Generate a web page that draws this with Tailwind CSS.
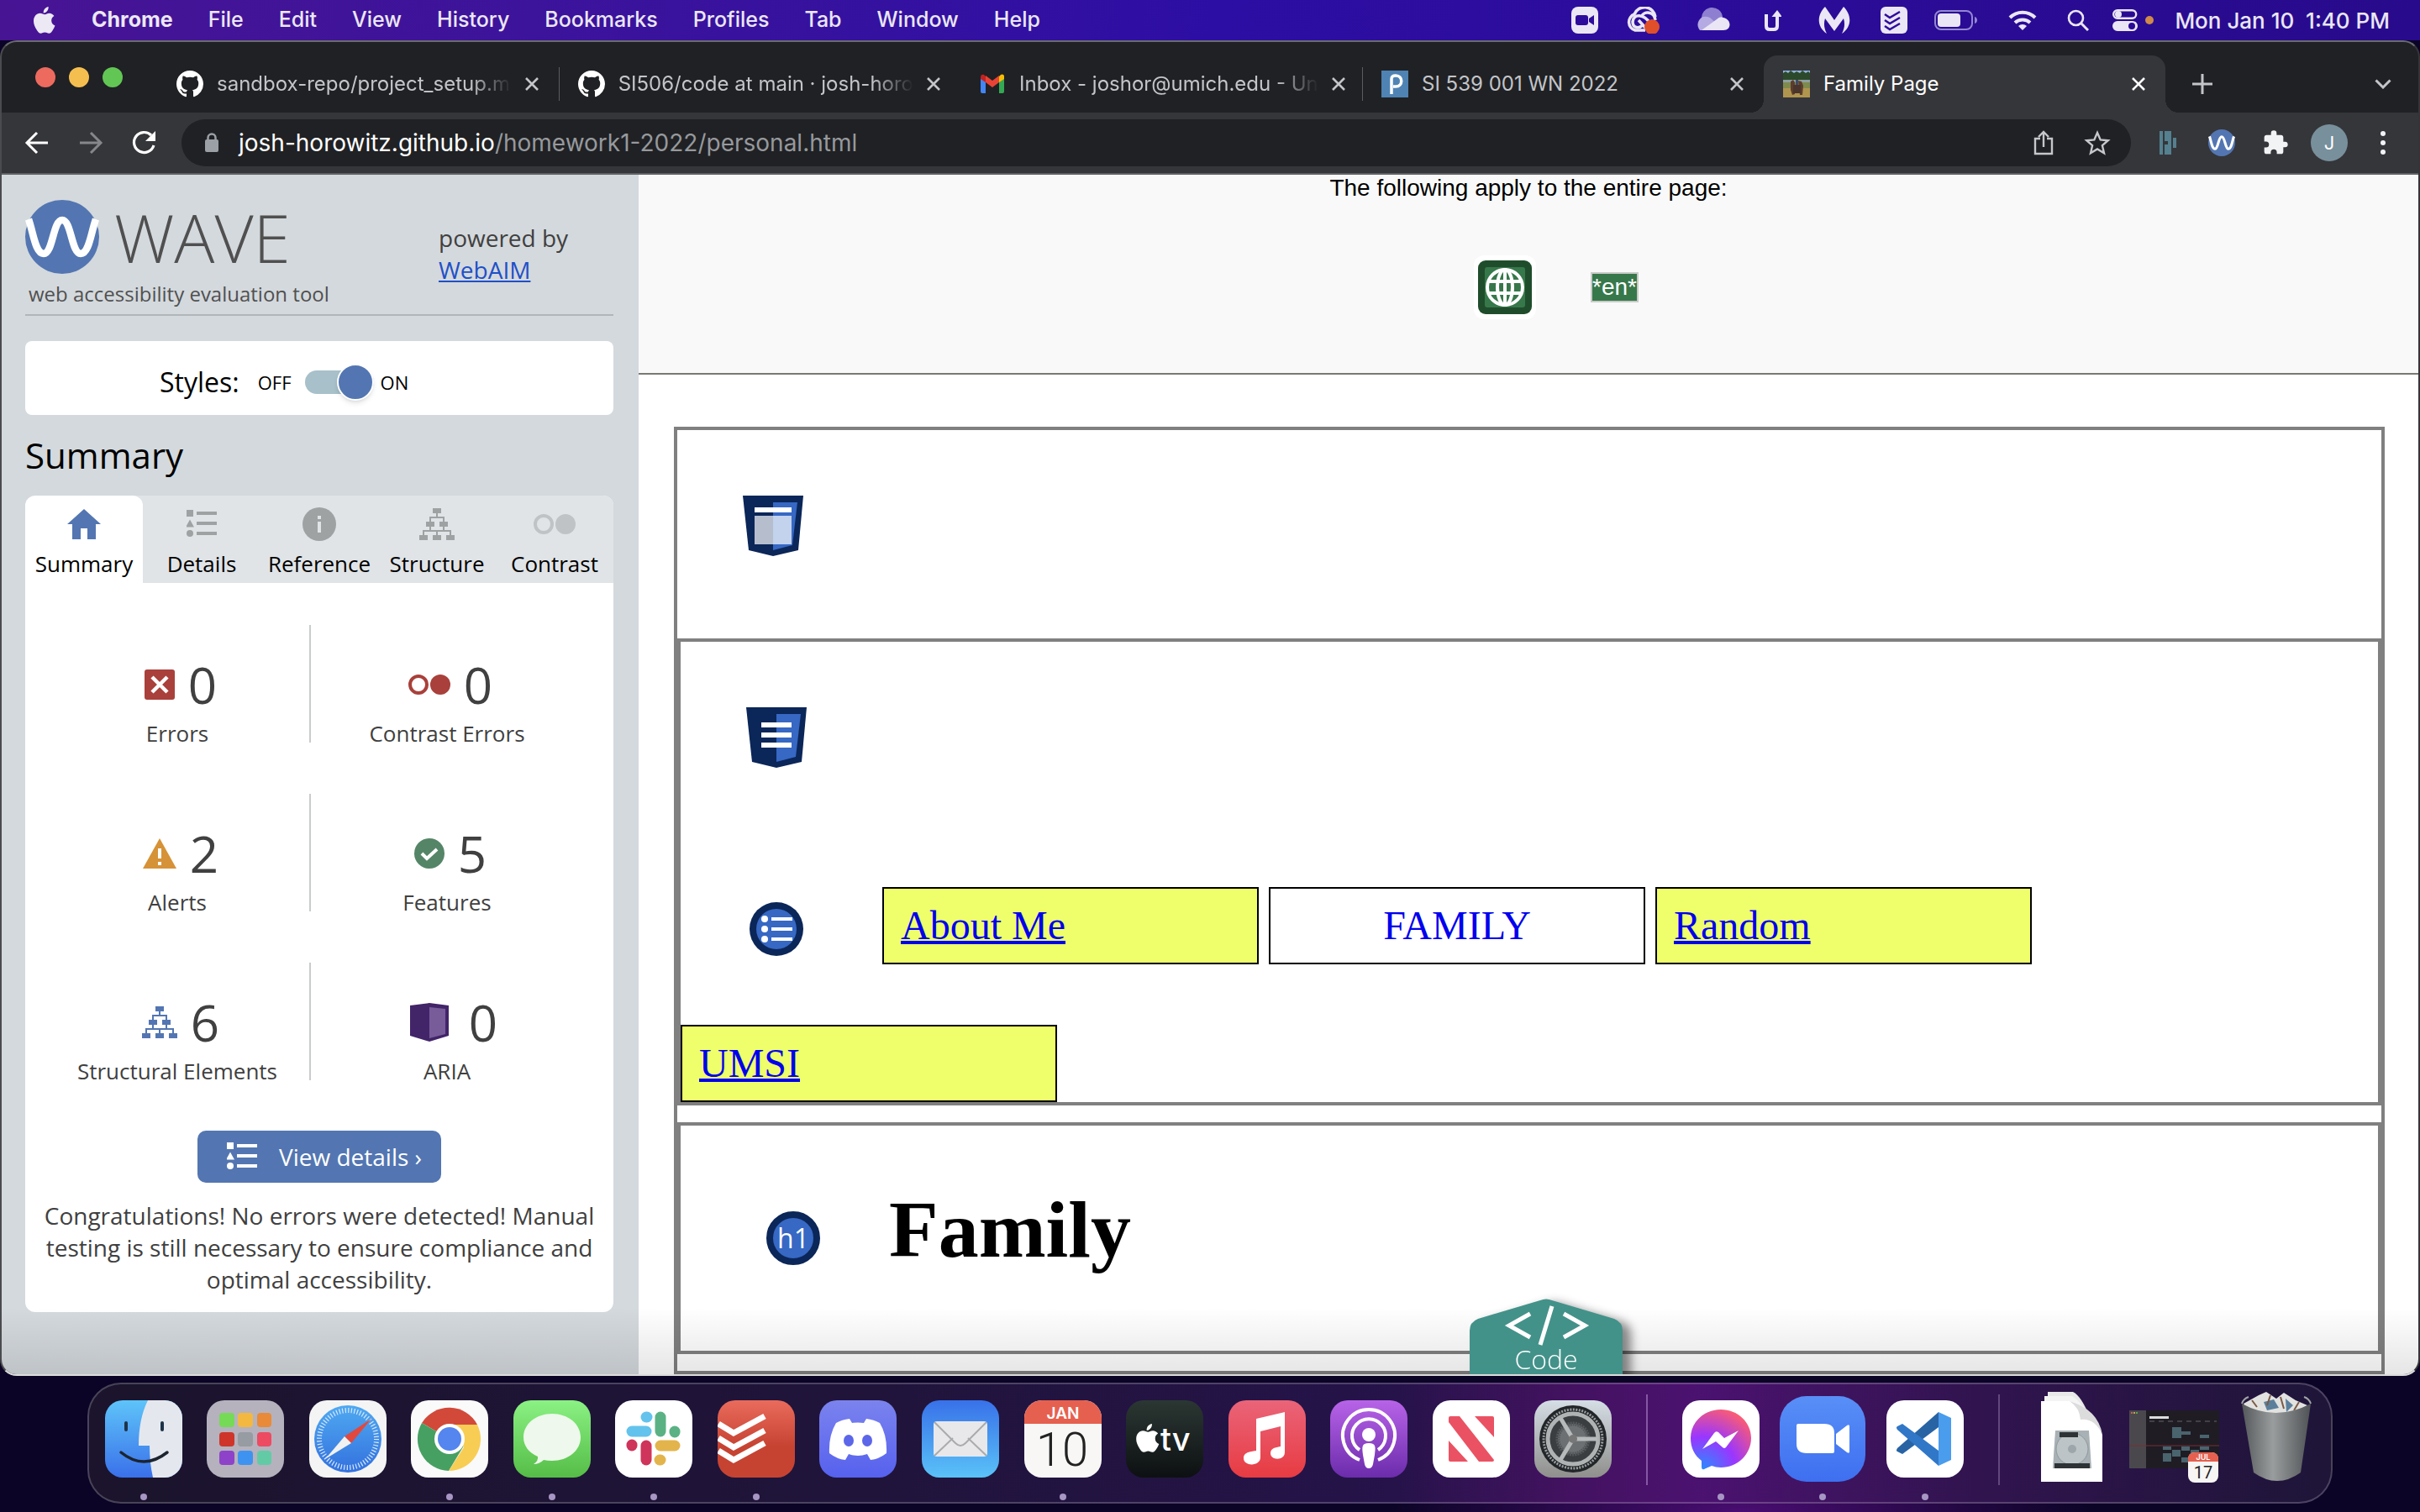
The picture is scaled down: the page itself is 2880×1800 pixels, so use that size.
<!DOCTYPE html>
<html lang="en">
<head>
<meta charset="utf-8">
<title>Family Page</title>
<script src="https://cdn.jsdelivr.net/npm/@tailwindcss/browser@4"></script>
</head>
<body class="flex h-screen flex-col overflow-hidden bg-[#0b0426] bg-[radial-gradient(ellipse_420px_90px_at_72%_100%,#4a0d72,transparent)] font-['Inter',sans-serif]">

<svg class="hidden">
  <symbol id="github" viewBox="0 0 16 16"><path fill="#fff" d="M8 0C3.58 0 0 3.58 0 8c0 3.54 2.29 6.53 5.47 7.59.4.07.55-.17.55-.38 0-.19-.01-.82-.01-1.49-2.01.37-2.53-.49-2.69-.94-.09-.23-.48-.94-.82-1.13-.28-.15-.68-.52-.01-.53.63-.01 1.08.58 1.23.82.72 1.21 1.87.87 2.33.66.07-.52.28-.87.51-1.07-1.78-.2-3.64-.89-3.64-3.95 0-.87.31-1.59.82-2.15-.08-.2-.36-1.02.08-2.12 0 0 .67-.21 2.2.82.64-.18 1.32-.27 2-.27s1.36.09 2 .27c1.53-1.04 2.2-.82 2.2-.82.44 1.1.16 1.92.08 2.12.51.56.82 1.27.82 2.15 0 3.07-1.87 3.75-3.65 3.95.29.25.54.73.54 1.48 0 1.07-.01 1.93-.01 2.2 0 .21.15.46.55.38A8.01 8.01 0 0 0 16 8c0-4.42-3.58-8-8-8z"/></symbol>
  <symbol id="close" viewBox="0 0 24 24"><path d="M5 5 19 19M19 5 5 19" fill="none" stroke="currentColor" stroke-width="2.6"/></symbol>
  <symbol id="apple" viewBox="0 0 26 32"><path fill="currentColor" d="M17.6 0c.3 2.500-.7 4.200-1.800 5.500-1.100 1.300-2.600 2-4.100 1.900-.2-2 .7-4 1.800-5.200C14.600 1 16.200.2 17.600 0zM13.400 9.200c1.300 0 2.900-1.500 5.300-1.500 2.300 0 4.500 1.300 5.700 3.200-2 1.300-3.200 3.100-3.200 5.600 0 3 1.700 5 4.300 6.100-.6 1.900-1.600 3.800-2.900 5.700-1.100 1.700-2.400 3.500-4.400 3.500-1.900 0-2.500-1.200-4.800-1.200-2.300 0-3 1.200-4.800 1.200-1.900 0-3.300-1.800-4.500-3.600C1.400 24.200 0 20.500 0 17.200c0-5.800 3.600-9.400 7.500-9.400 2.500 0 4.300 1.400 5.900 1.400z"/></symbol>
  <symbol id="list" viewBox="0 0 36 34"><g fill="currentColor"><path d="M0 0h8v8H0zM4 11.500 9 20.500H-1z"/><circle cx="4" cy="28" r="4"/><path d="M12 2h24v4H12zM12 14h24v4H12zM12 26h24v4H12z"/></g></symbol>
  <symbol id="tree" viewBox="0 0 42 38"><g fill="currentColor"><path d="M16 0h10v6H16zM8 16h10v6H8zM24 16h10v6H24zM0 32h10v6H0zM16 32h10v6H16zM32 32h10v6H32z"/></g><path d="M21 6v5M13 17v-6h16v6M13 22v5M29 22v5M5 33v-6h32v6M21 27v6" fill="none" stroke="currentColor" stroke-width="2"/></symbol>
  <symbol id="rings" viewBox="0 0 50 24"><circle cx="12" cy="12" r="10" fill="none" stroke="currentColor" stroke-width="4"/><circle cx="38" cy="12" r="12" fill="currentColor"/></symbol>
  <symbol id="shield" viewBox="0 0 72 72"><path fill="#0b2658" d="M0 0h72l-6 65-30 7-29-7z"/><path fill="#3668c4" d="M36 8h29l-6 51-23 6z"/></symbol>
  <symbol id="wave" viewBox="0 0 88 88"><circle cx="44" cy="44" r="44" fill="#5376b2"/><path d="M4 23C10 40 12 64 22 64 33 64 33 24 44 24S55 64 66 64C76 64 78 40 84 23" fill="none" stroke="#fff" stroke-width="8.500"/></symbol>
</svg>

<!-- Menu bar -->
<header class="flex h-12 shrink-0 items-center bg-linear-to-r from-[#471494] via-[#2d0ea4] to-[#280a8c] pr-9 pl-10 text-[25px] font-medium text-white/90">
  <svg class="mr-[22px] h-8 w-[26px]"><use href="#apple"/></svg>
  <nav class="flex flex-1 items-center">
    <button class="px-[21px] font-bold">Chrome</button>
    <button class="px-[21px]">File</button>
    <button class="px-[21px]">Edit</button>
    <button class="px-[21px]">View</button>
    <button class="px-[21px]">History</button>
    <button class="px-[21px]">Bookmarks</button>
    <button class="px-[21px]">Profiles</button>
    <button class="px-[21px]">Tab</button>
    <button class="px-[21px]">Window</button>
    <button class="px-[21px]">Help</button>
  </nav>
  <div class="flex items-center">
    <svg class="h-8 w-8" viewBox="0 0 32 32"><rect width="32" height="32" rx="8" fill="#ebe6f5"/><rect x="5" y="10" width="15" height="12" rx="3" fill="#2d0c9c"/><path d="M21 14l6-4v12l-6-4z" fill="#2d0c9c"/></svg>
    <svg class="ml-8 h-8 w-[42px]" viewBox="0 0 42 32"><g fill="none" stroke="#ebe6f5" stroke-width="3.500"><path d="M24 28H12A10 10 0 0 1 11 9a13 13 0 0 1 25 3"/><path d="M30 20c-8-12-20-12-21-2 0 8 8 8 12 4M19 12c4-8 16-6 17 4M16 16l10 11"/></g><circle cx="32" cy="24" r="9" fill="#df4f2a"/></svg>
    <svg class="ml-10 h-8 w-11" viewBox="0 0 44 32"><path d="M9 15a12 12 0 0 1 25-3l-8 8z" fill="#8f7fd0"/><path d="M7 28a10 10 0 0 1 4-16q4-1 8 1l8 7-13 8z" fill="#b5aae2"/><path d="M9 28 27 15q4-4 8-2c10 2 10 15 0 15z" fill="#ebe6f5"/></svg>
    <svg class="ml-10 h-8 w-5" viewBox="0 0 20 32"><path d="M2 9v14q0 4 4 4h5q4 0 4-4V9" fill="none" stroke="#ebe6f5" stroke-width="4"/><path d="M8.500 12 15 4l6 8z" fill="#ebe6f5"/></svg>
    <svg class="ml-11 h-8 w-[38px]" viewBox="0 0 38 32"><path d="M8 0l11 16L30 0c10 10 10 24-2 32 3-6 4-12 2-18l-11 15L8 14c-2 6-1 12 2 18C-2 24-2 10 8 0z" fill="#ebe6f5"/></svg>
    <svg class="ml-9 h-8 w-8" viewBox="0 0 32 32"><rect width="32" height="32" rx="6" fill="#ebe6f5"/><path d="M5 9l6 4L23 6M5 16l6 4 12-7M5 23l6 4 12-7" fill="none" stroke="#2d0c9c" stroke-width="2.500"/></svg>
    <svg class="ml-8 h-6 w-[52px]" viewBox="0 0 52 24"><rect x="1" y="1" width="44" height="22" rx="7" fill="none" stroke="#9487d2" stroke-width="2"/><rect x="4" y="4" width="27" height="16" rx="4" fill="#ebe6f5"/><path d="M48 8c4 1 4 7 0 8z" fill="#9487d2"/></svg>
    <svg class="ml-9 h-6 w-[34px]" viewBox="0 0 34 24"><g fill="none" stroke="#ebe6f5" stroke-width="4"><path d="M2 9a21 21 0 0 1 30 0"/><path d="M8 15a13 13 0 0 1 18 0"/></g><path d="M12 19a7 7 0 0 1 10 0l-5 5z" fill="#ebe6f5"/></svg>
    <svg class="ml-9 h-[26px] w-[26px]" viewBox="0 0 26 26"><circle cx="10.500" cy="10.500" r="8.500" fill="none" stroke="#ebe6f5" stroke-width="2.600"/><path d="M17 17l8 8" stroke="#ebe6f5" stroke-width="3"/></svg>
    <svg class="ml-7 h-[26px] w-[50px]" viewBox="0 0 50 26"><rect x="1.200" y="1.200" width="27" height="9.600" rx="4.800" fill="none" stroke="#ebe6f5" stroke-width="2.400"/><circle cx="7" cy="6" r="4" fill="#ebe6f5"/><rect y="14" width="30" height="12" rx="6" fill="#ebe6f5"/><circle cx="23" cy="20" r="4" fill="#2b0b97"/><circle cx="44" cy="13" r="5" fill="#d08a4a"/></svg>
    <time class="ml-6 text-[26px] whitespace-pre">Mon Jan 10  1:40 PM</time>
  </div>
</header>

<!-- Browser window -->
<div class="relative flex min-h-0 flex-1 flex-col overflow-hidden rounded-[20px] border-2 border-t-[#6a6b6e] border-r-[#55565a]/40 border-b-[#dcdcdc] border-l-[#8a8b8e]/40 bg-[#202124]">
  <div class="flex h-[84px] shrink-0 items-end text-[24px] text-[#c3c5c9]">
    <div class="flex w-[185px] shrink-0 gap-4 self-center pb-0 pl-10">
      <span class="h-6 w-6 rounded-full bg-[#ed6a5f]"></span>
      <span class="h-6 w-6 rounded-full bg-[#f5bf50]"></span>
      <span class="h-6 w-6 rounded-full bg-[#62c655]"></span>
    </div>
    <div class="flex h-[68px] w-[478px] items-center pr-5 pl-[23px]">
      <svg class="mr-4 h-8 w-8 shrink-0"><use href="#github"/></svg>
      <button class="flex-1 text-left whitespace-nowrap [mask-image:linear-gradient(to_right,black_86%,transparent)]">sandbox-repo/project_setup.m</button>
      <button class="ml-3 h-6 w-6" aria-label="Close tab"><svg class="h-6 w-6"><use href="#close"/></svg></button>
    </div>
    <div class="flex h-[68px] w-[478px] items-center pr-5">
      <span class="mr-[22px] h-10 w-px bg-[#5a5c60]"></span>
      <svg class="mr-4 h-8 w-8 shrink-0"><use href="#github"/></svg>
      <button class="flex-1 text-left whitespace-nowrap [mask-image:linear-gradient(to_right,black_86%,transparent)]">SI506/code at main · josh-horo</button>
      <button class="ml-3 h-6 w-6" aria-label="Close tab"><svg class="h-6 w-6"><use href="#close"/></svg></button>
    </div>
    <div class="flex h-[68px] w-[478px] items-center pr-5">
      <span class="mr-[22px] h-10 w-px bg-[#5a5c60]"></span>
      <svg class="mr-4 h-8 w-8 shrink-0" viewBox="0 0 32 32"><path d="M2 9v16q0 2 2 2h4V13z" fill="#4285f4"/><path d="M30 9v16q0 2-2 2h-4V13z" fill="#34a853"/><path d="M24 7v7l6-4V7c0-3-3-3-4-2z" fill="#fbbc04"/><path d="M8 6l8 6 8-6v8l-8 6-8-6z" fill="#ea4335"/><path d="M8 14V7L6 5C4 4 2 5 2 8v2z" fill="#c5221f"/></svg>
      <button class="flex-1 text-left whitespace-nowrap [mask-image:linear-gradient(to_right,black_86%,transparent)]">Inbox - joshor@umich.edu - Un</button>
      <button class="ml-3 h-6 w-6" aria-label="Close tab"><svg class="h-6 w-6"><use href="#close"/></svg></button>
    </div>
    <div class="flex h-[68px] w-[478px] items-center pr-5">
      <span class="mr-[22px] h-10 w-px bg-[#5a5c60]"></span>
      <svg class="mr-4 h-8 w-8 shrink-0" viewBox="0 0 32 32"><path d="M0 0h32v32H0z" fill="#4f83b4"/><path d="M12 28V10q0-4 5-4c9 0 9 13 0 13h-3" fill="none" stroke="#fff" stroke-width="3.500"/></svg>
      <button class="flex-1 text-left whitespace-nowrap">SI 539 001 WN 2022</button>
      <button class="ml-3 h-6 w-6" aria-label="Close tab"><svg class="h-6 w-6"><use href="#close"/></svg></button>
    </div>
    <div class="relative flex h-[68px] w-[478px] items-center rounded-t-2xl bg-[#35363a] pr-5 pl-[23px] text-white before:absolute before:bottom-0 before:-left-4 before:h-4 before:w-4 before:bg-[radial-gradient(circle_at_0_0,transparent_16px,#35363a_16px)] after:absolute after:-right-4 after:bottom-0 after:h-4 after:w-4 after:bg-[radial-gradient(circle_at_100%_0,transparent_16px,#35363a_16px)]">
      <svg class="mr-4 h-8 w-8 shrink-0" viewBox="0 0 32 32"><path d="M0 0h32v32H0z" fill="#7f8a4d"/><path d="M0 0h32v4H0z" fill="#8fb3dc"/><path d="M0 3l3-2 3 2 3-3 4 3 3-2 4 2 3-3 4 3 3-2 2 2v8H0z" fill="#2c4a2b"/><path d="M0 11h32v3H0z" fill="#8fa0a0"/><path d="M0 21h32v11H0z" fill="#b0954f"/><path d="M9 13l3-2 2 3v14l-3 1-2-6zM18 12l4 1 2 5-1 11h-3z" fill="#5d3d2e"/><path d="M12 17h9v10h-9z" fill="#4a352c"/><path d="M15 11h3v6h-3z" fill="#3d4a6a"/></svg>
      <button class="flex-1 text-left whitespace-nowrap">Family Page</button>
      <button class="ml-3 h-6 w-6" aria-label="Close tab"><svg class="h-6 w-6"><use href="#close"/></svg></button>
    </div>
    <button class="ml-8 flex h-[68px] w-6 items-center" aria-label="New tab"><svg viewBox="0 0 24 24"><path d="M12 0v24M0 12h24" stroke="currentColor" stroke-width="3"/></svg></button>
    <button class="mr-8 ml-auto flex h-[68px] w-5 items-center" aria-label="Search tabs"><svg viewBox="0 0 20 12"><path d="M1.500 1.500 10 10l8.500-8.500" fill="none" stroke="currentColor" stroke-width="3"/></svg></button>
  </div>

  <div class="flex h-[74px] shrink-0 items-center border-b-2 border-[#5f6064] bg-[#35363a] pr-[34px] pb-0 pl-[26px]">
    <button class="w-8" aria-label="Back"><svg viewBox="0 0 32 32"><path d="M29 16H4M16 4 4 16l12 12" fill="none" stroke="#fff" stroke-width="3"/></svg></button>
    <button class="ml-8 w-8" aria-label="Forward"><svg viewBox="0 0 32 32"><path d="M3 16h25M16 4l12 12-12 12" fill="none" stroke="#85878a" stroke-width="3"/></svg></button>
    <button class="ml-8 w-8" aria-label="Reload"><svg viewBox="0 0 32 32"><path d="M27 19a12 12 0 1 1-3-12" fill="none" stroke="#fff" stroke-width="3.200"/><path d="M29 2v12H17z" fill="#fff"/></svg></button>
    <div class="ml-7 flex h-14 flex-1 items-center rounded-full bg-[#202124] px-6">
      <svg class="h-6 w-6" viewBox="0 0 24 24"><rect x="4" y="8" width="16" height="15" rx="2" fill="#9aa0a6"/><path d="M7.500 9V6a4.500 4.500 0 0 1 9 0v3" fill="none" stroke="#9aa0a6" stroke-width="2.500"/></svg>
      <div role="textbox" contenteditable="true" aria-label="Address" class="ml-5 flex-1 text-[28px] text-[#96999d]"><span class="text-white">josh-horowitz.github.io</span>/homework1-2022/personal.html</div>
      <button class="w-6" aria-label="Share"><svg viewBox="0 0 24 30"><path d="M8 10H2v18h20V10h-6M12 20V2M6 8l6-6 6 6" fill="none" stroke="#c5c7ca" stroke-width="2.400"/></svg></button>
      <button class="ml-9 w-8" aria-label="Bookmark"><svg viewBox="0 0 32 32"><path d="M16 4l3.700 8.400 9.100.8-6.900 6 2.100 9L16 23.500 8 28.200l2.100-9-6.900-6 9.100-.8z" fill="none" stroke="#c5c7ca" stroke-width="2.400"/></svg></button>
    </div>
    <svg class="ml-8 h-8 w-6" viewBox="0 0 24 32"><path d="M4 2v28M10 2v10h4M10 18v12M14 2v28M20 10v12" fill="none" stroke="#54808f" stroke-width="4"/></svg>
    <svg class="ml-9 h-8 w-8"><use href="#wave"/></svg>
    <svg class="ml-8 h-8 w-8" viewBox="0 0 24 24"><path fill="#f1f3f4" d="M20.500 11H19V7c0-1.100-.9-2-2-2h-4V3.500a2.500 2.500 0 0 0-5 0V5H4c-1.100 0-2 .9-2 2v3.800h1.500a2.700 2.700 0 0 1 0 5.400H2V20c0 1.100.9 2 2 2h3.800v-1.500a2.700 2.700 0 0 1 5.400 0V22H17c1.100 0 2-.9 2-2v-4h1.500a2.500 2.500 0 0 0 0-5z"/></svg>
    <button class="ml-[26px] h-11 w-11 rounded-full bg-[#78909c] text-[22px] text-white">J</button>
    <button class="ml-[34px] w-4" aria-label="Menu"><svg viewBox="0 0 16 32"><g fill="#f1f3f4"><circle cx="8" cy="5" r="3"/><circle cx="8" cy="16" r="3"/><circle cx="8" cy="27" r="3"/></g></svg></button>
  </div>

  <div class="flex min-h-0 flex-1">
    <!-- WAVE sidebar -->
    <aside class="w-[758px] shrink-0 bg-[#d4d9dd] pr-[30px] pl-7 font-['Open_Sans',sans-serif] text-[#404040]">
      <div class="flex justify-between border-b-2 border-[#b0b6b8] pt-[30px] pb-2">
        <div class="text-[#505050]">
          <div class="flex items-center gap-[18px]"><svg class="h-[88px] w-[88px]"><use href="#wave"/></svg><span class="text-[80px] leading-[88px] font-light">WAVE</span></div>
          <p class="pt-2 pl-1 text-[24px] leading-8">web accessibility evaluation tool</p>
        </div>
        <p class="w-52 pt-[26px] text-[28px] leading-[38px]">powered by<br><a href="#" class="text-[#1f50c8] underline">WebAIM</a></p>
      </div>
      <div class="mt-[30px] flex h-[88px] items-center rounded-lg bg-white pt-[10px] pl-40 text-black">
        <label for="styles" class="text-[32px]">Styles:</label>
        <span class="ml-[22px] text-[22px]">OFF</span>
        <input id="styles" type="checkbox" checked class="relative ml-4 h-7 w-[82px] appearance-none rounded-full bg-[#a7c0c9] before:absolute before:-top-2 before:right-0 before:h-11 before:w-11 before:rounded-full before:border-2 before:border-white before:bg-[#5376b2] before:shadow-md">
        <span class="ml-2 text-[22px]">ON</span>
      </div>
      <h2 class="mt-5 text-[42px] leading-[56px] text-black">Summary</h2>
      <div class="mt-5 overflow-hidden rounded-xl bg-white">
        <div role="tablist" class="grid h-[104px] grid-cols-5 bg-[#e0e4e7] text-[26px] leading-9 text-black">
          <button role="tab" class="flex flex-col items-center rounded-t-xl bg-white pt-[10px]">
            <span class="mb-[5px] flex h-12 items-center"><svg class="h-9 w-10" viewBox="0 0 40 36"><path d="M20 0 40 18h-6v18H24V23h-8v13H6V18H0z" fill="#5376b2"/></svg></span>Summary</button>
          <button role="tab" class="flex flex-col items-center pt-[10px]">
            <span class="mb-[5px] flex h-12 items-center"><svg class="h-[34px] w-9 overflow-visible text-[#9fa2a3]"><use href="#list"/></svg></span>Details</button>
          <button role="tab" class="flex flex-col items-center pt-[10px]">
            <span class="mb-[5px] flex h-12 items-center"><svg class="h-10 w-10" viewBox="0 0 40 40"><circle cx="20" cy="20" r="20" fill="#9fa2a3"/><path d="M18 10h4v4h-4zM18 17h4v13h-4z" fill="#e0e4e7"/></svg></span>Reference</button>
          <button role="tab" class="flex flex-col items-center pt-[10px]">
            <span class="mb-[5px] flex h-12 items-center"><svg class="h-[38px] w-[42px] text-[#9fa2a3]"><use href="#tree"/></svg></span>Structure</button>
          <button role="tab" class="flex flex-col items-center pt-[10px]">
            <span class="mb-[5px] flex h-12 items-center"><svg class="h-6 w-[50px] text-[#bfc3c5]"><use href="#rings"/></svg></span>Contrast</button>
        </div>
        <div class="flex flex-col gap-[61px] pt-[50px] pr-9 pl-6 text-center text-[26px] leading-9">
          <div class="flex h-[140px]">
            <div class="w-[316px] border-r-2 border-[#c9cbcc] pt-[31px]"><div class="flex items-center justify-center gap-4 pl-2"><svg class="h-9 w-9" viewBox="0 0 36 36"><rect width="36" height="36" rx="3" fill="#a9403b"/><path d="M9 9l18 18M27 9 9 27" stroke="#fff" stroke-width="4.500"/></svg><span class="text-[60px] leading-[80px]">0</span></div>Errors</div>
            <div class="flex-1 pt-[31px]"><div class="flex items-center justify-center gap-4 pl-2"><svg class="h-6 w-[50px] text-[#a9403b]"><use href="#rings"/></svg><span class="text-[60px] leading-[80px]">0</span></div>Contrast Errors</div>
          </div>
          <div class="flex h-[140px]">
            <div class="w-[316px] border-r-2 border-[#c9cbcc] pt-[31px]"><div class="flex items-center justify-center gap-4 pl-2"><svg class="h-9 w-10" viewBox="0 0 40 36"><path d="M20 0 40 36H0z" fill="#d69237"/><path d="M18 12h4v12h-4zM18 28h4v4h-4z" fill="#fff"/></svg><span class="text-[60px] leading-[80px]">2</span></div>Alerts</div>
            <div class="flex-1 pt-[31px]"><div class="flex items-center justify-center gap-4 pl-2"><svg class="h-9 w-9" viewBox="0 0 36 36"><circle cx="18" cy="18" r="18" fill="#558567"/><path d="M9 18l6 6 12-11" fill="none" stroke="#fff" stroke-width="4"/></svg><span class="text-[60px] leading-[80px]">5</span></div>Features</div>
          </div>
          <div class="flex h-[140px]">
            <div class="w-[316px] border-r-2 border-[#c9cbcc] pt-[31px]"><div class="flex items-center justify-center gap-4 pl-2"><svg class="h-[38px] w-[42px] text-[#5376b2]"><use href="#tree"/></svg><span class="text-[60px] leading-[80px]">6</span></div>Structural Elements</div>
            <div class="flex-1 pt-[31px]"><div class="flex items-center justify-center gap-6 pl-4"><svg class="h-[46px] w-[46px]" viewBox="0 0 46 46"><path d="M23 0l23 3v36l-23 7-23-7V3z" fill="#422469"/><path d="M23 5l19 2v30l-19 5z" fill="#785c9a"/></svg><span class="text-[60px] leading-[80px]">0</span></div>ARIA</div>
          </div>
        </div>
        <button class="mx-auto mt-[60px] flex h-[62px] w-[290px] items-center justify-center gap-[26px] rounded-[10px] bg-[#5376b2] pl-3 text-[28px] text-white"><svg class="h-[34px] w-9 overflow-visible"><use href="#list"/></svg>View details ›</button>
        <p class="mt-5 px-4 pb-5 text-center text-[28px] leading-[38px]">Congratulations! No errors were detected! Manual testing is still necessary to ensure compliance and optimal accessibility.</p>
      </div>
    </aside>

    <!-- Evaluated page -->
    <main class="relative min-w-0 flex-1 bg-white font-['Liberation_Serif',serif]">
      <div class="h-[238px] border-b-2 border-[#787a72] bg-[#f9f9f9] text-center font-['Liberation_Sans',sans-serif] text-[28px] leading-8 text-black">
        <p>The following apply to the entire page:</p>
        <div class="mt-16 flex items-center justify-center gap-[65px] pl-[66px]">
          <svg class="h-[76px] w-[74px]" viewBox="0 0 74 76"><rect width="74" height="76" rx="12" fill="#fff"/><rect x="5" y="6" width="64" height="64" rx="9" fill="#1f4d2b"/><rect x="13" y="14" width="48" height="48" rx="3" fill="#37784b"/><g fill="none" stroke="#fff" stroke-width="4"><circle cx="37" cy="38" r="21"/><ellipse cx="37" cy="38" rx="9" ry="21"/><path d="M37 17v42M18 31h38M18 45h38" /></g></svg>
          <span class="border-2 border-[#c8cbc8] bg-[#37784b] text-[28px] text-white">*en*</span>
        </div>
      </div>
      <div class="mx-[42px] mt-[62px] mr-10 border-4 border-[#808080]">
        <header class="h-[248px] p-[78px]">
          <svg class="h-[72px] w-[72px]" viewBox="0 0 72 72"><use href="#shield"/><path d="M14 14h44v6H14z" fill="#fff"/><path d="M14 24h44v34H14z" fill="#fff" fill-opacity=".7"/></svg>
        </header>
        <nav class="border-4 border-[#808080] pt-[78px]">
          <svg class="ml-[78px] h-[72px] w-[72px]" viewBox="0 0 72 72"><use href="#shield"/><path d="M18 18h36v6H18zM18 30h36v6H18zM18 42h36v6H18z" fill="#fff"/></svg>
          <ul class="mt-[142px] flex flex-wrap gap-x-3 gap-y-[72px] text-[48px] leading-[88px] text-[#0000ee]">
            <li class="w-[228px] pt-[18px] pl-[82px]"><svg class="h-16 w-16" viewBox="0 0 64 64"><circle cx="32" cy="32" r="32" fill="#0b2658"/><circle cx="32" cy="32" r="24" fill="#3668c4"/><g fill="#fff"><circle cx="18" cy="20" r="4"/><circle cx="18" cy="32" r="4"/><circle cx="18" cy="44" r="4"/><path d="M26 18h25v4H26zM26 30h25v4H26zM26 42h25v4H26z"/></g></svg></li>
            <li class="w-[448px] border-2 border-black bg-[#efff6b] pl-5"><a href="#" class="underline decoration-4">About Me</a></li>
            <li class="w-[448px] border-2 border-black bg-white text-center"><a href="#">FAMILY</a></li>
            <li class="w-[448px] border-2 border-black bg-[#efff6b] pl-5"><a href="#" class="underline decoration-4">Random</a></li>
            <li class="w-[448px] border-2 border-black bg-[#efff6b] pl-5"><a href="#" class="underline decoration-4">UMSI</a></li>
          </ul>
        </nav>
        <section class="my-5 flex h-[276px] items-center border-4 border-[#808080] pl-[102px]">
          <span class="flex h-16 w-16 items-center justify-center rounded-full border-8 border-[#0b2658] bg-[#3668c4] font-['Open_Sans',sans-serif] text-[32px] text-white">h1</span>
          <h1 class="ml-[82px] pb-5 text-[96px] leading-[110px] font-bold text-black">Family</h1>
        </section>
      </div>
      <div class="pointer-events-none absolute inset-x-0 bottom-0 h-20 bg-linear-to-b from-transparent to-black/10"></div>
      <button class="absolute bottom-0 left-[calc(50%-70px)] flex h-[90px] w-[182px] flex-col items-center justify-end font-['Open_Sans',sans-serif] text-[32px] leading-9 font-light text-white drop-shadow-[10px_4px_6px_rgba(0,0,0,0.45)]">
        <svg class="absolute inset-0" viewBox="0 0 182 92"><path d="M0 92V38q0-10 10-14L84 2q7-3 14 0l74 22q10 4 10 14v54z" fill="#43928a"/><path d="M72 18 47 32l25 14M112 18l25 14-25 14M98 9 84 55" fill="none" stroke="#fff" stroke-width="5"/></svg>
        <span class="relative">Code</span>
      </button>
    </main>
  </div>
  <div class="pointer-events-none absolute bottom-0 left-0 h-20 w-[758px] bg-linear-to-b from-transparent to-black/10"></div>
</div>

<!-- Dock -->
<footer class="mx-[104px] mt-2 mb-2.5 flex h-36 shrink-0 rounded-[40px] border-2 border-white/20 bg-[linear-gradient(90deg,#1b142c_0%,#20143b_35%,#251349_58%,#431260_66%,#4b1270_72%,#31144f_84%,#1e1538_100%)] px-1 [&>div]:flex [&>div]:flex-1 [&>div]:flex-col [&>div]:items-center [&>div]:justify-center [&>div]:relative [&>div>svg]:h-[92px] [&>div>svg]:w-[92px] [&>div>svg]:-mt-[10px] [&>div>i]:absolute [&>div>i]:bottom-0.5 [&>div>i]:h-2 [&>div>i]:w-2 [&>div>i]:rounded-full [&>div>i]:bg-[#a795c4]">
  <div><svg viewBox="0 0 92 92"><defs><linearGradient id="fb" x2="0" y2="1"><stop stop-color="#5ec4f9"/><stop offset="1" stop-color="#3a70ea"/></linearGradient><clipPath id="r"><rect width="92" height="92" rx="21"/></clipPath></defs><g clip-path="url(#r)"><path d="M0 0h92v92H0z" fill="url(#fb)"/><path d="M51 0h41v92H57q-4-18-4-38H40Q40 22 51 0z" fill="#e4e8ee"/></g><path d="M25 27v8M68 27v8" stroke="#1d3348" stroke-width="4" stroke-linecap="round"/><path d="M19 62q27 22 55 0" fill="none" stroke="#1c2430" stroke-width="3.500" stroke-linecap="round"/></svg><i></i></div>
  <div><svg viewBox="0 0 92 92"><rect width="92" height="92" rx="21" fill="#b5b2bd"/><g><rect x="15" y="15" width="18" height="17" rx="4" fill="#75da55"/><rect x="37" y="15" width="18" height="17" rx="4" fill="#f3b83f"/><rect x="60" y="15" width="17" height="17" rx="4" fill="#e88a38"/><rect x="15" y="38" width="18" height="17" rx="4" fill="#ce3429"/><rect x="37" y="38" width="18" height="17" rx="4" fill="#969ca1"/><rect x="60" y="38" width="17" height="17" rx="4" fill="#ec4b62"/><rect x="15" y="60" width="18" height="17" rx="4" fill="#8e42c9"/><rect x="37" y="60" width="18" height="17" rx="4" fill="#3f93f0"/><rect x="60" y="60" width="17" height="17" rx="4" fill="#62cba6"/></g></svg></div>
  <div><svg viewBox="0 0 92 92"><defs><linearGradient id="sf" x2="0" y2="1"><stop stop-color="#4fa9f1"/><stop offset="1" stop-color="#3371de"/></linearGradient></defs><rect width="92" height="92" rx="21" fill="#f4f4f4"/><circle cx="46" cy="46" r="40" fill="url(#sf)"/><circle cx="46" cy="46" r="34" fill="none" stroke="#d8e8fb" stroke-width="6" stroke-dasharray="1.200 2.360"/><path d="M74 22 50 51l-8-8z" fill="#e2483d"/><path d="M19 70 42 43l8 8z" fill="#f1f1f1"/></svg></div>
  <div><svg viewBox="0 0 92 92"><rect width="92" height="92" rx="21" fill="#fafafa"/><path d="M46 46 13 27a38 38 0 0 1 66 2z" fill="#d2493a"/><path d="M46 46 13 27a38 38 0 0 0 32 57l18-30z" fill="#46a062"/><path d="M46 29h33a38 38 0 0 1-34 55l18-28z" fill="#f8cd54"/><circle cx="46" cy="46" r="18" fill="#fff"/><circle cx="46" cy="46" r="14" fill="#5585ee"/></svg><i></i></div>
  <div><svg viewBox="0 0 92 92"><defs><linearGradient id="ms" x2="0" y2="1"><stop stop-color="#8af183"/><stop offset="1" stop-color="#55bd47"/></linearGradient></defs><rect width="92" height="92" rx="21" fill="url(#ms)"/><path d="M46 16c19 0 34 12 34 28S65 72 46 72q-6 0-10-1-5 5-12 5 6-4 5-9C18 62 12 54 12 44c0-16 15-28 34-28z" fill="#eef8ec"/></svg><i></i></div>
  <div><svg viewBox="0 0 92 92"><rect width="92" height="92" rx="21" fill="#fff"/><g stroke-width="13" stroke-linecap="round" fill="none"><path d="M20 37h17" stroke="#64c3ec"/><path d="M37 20h1" stroke="#64c3ec"/><path d="M54 20v17" stroke="#5ab284"/><path d="M71 37v1" stroke="#5ab284"/><path d="M54 54h17" stroke="#e3b44b"/><path d="M54 71h-1" stroke="#e3b44b"/><path d="M37 54v17" stroke="#cf345b"/><path d="M20 54v-1" stroke="#cf345b"/></g></svg><i></i></div>
  <div><svg viewBox="0 0 92 92"><defs><linearGradient id="td" x2="0" y2="1"><stop stop-color="#ea6b5c"/><stop offset=".6" stop-color="#c64332"/></linearGradient></defs><rect width="92" height="92" rx="21" fill="url(#td)"/><path d="M1 28l18 11 37-20M1 45l18 11 37-20M1 60l18 11 37-20" fill="none" stroke="#fff" stroke-width="7"/></svg><i></i></div>
  <div><svg viewBox="0 0 92 92"><defs><linearGradient id="dc" x2="0" y2="1"><stop stop-color="#7b83ee"/><stop offset="1" stop-color="#5661ee"/></linearGradient></defs><rect width="92" height="92" rx="21" fill="url(#dc)"/><path d="M36 22q-9 1-16 5Q11 42 12 63q9 7 19 8l4-7q11 4 22 0l4 7q10-1 19-8 1-21-8-36-7-4-16-5l-3 5q-7-1-14 0z" fill="#fff"/><ellipse cx="35" cy="48" rx="6" ry="7" fill="#5c66e8"/><ellipse cx="57" cy="48" rx="6" ry="7" fill="#5c66e8"/></svg></div>
  <div><svg viewBox="0 0 92 92"><defs><linearGradient id="ml" x2="0" y2="1"><stop stop-color="#3871e9"/><stop offset="1" stop-color="#5ac2f8"/></linearGradient></defs><rect width="92" height="92" rx="21" fill="url(#ml)"/><rect x="14" y="25" width="64" height="42" rx="4" fill="#e8e8ea"/><path d="M15 66 37 45M77 66 55 45M15 26l25 25q6 6 12 0l25-25" fill="none" stroke="#a9abad" stroke-width="2"/></svg></div>
  <div><svg viewBox="0 0 92 92"><rect width="92" height="92" rx="21" fill="#f8f7f5"/><path d="M0 28v-7A21 21 0 0 1 21 0h50a21 21 0 0 1 21 21v7z" fill="#e6604f"/><text x="46" y="22" text-anchor="middle" font-size="19" font-weight="600" fill="#fff" font-family="Inter">JAN</text><text x="45" y="78" text-anchor="middle" font-size="56" font-weight="300" fill="#222" font-family="Roboto">10</text></svg><i></i></div>
  <div><svg viewBox="0 0 92 92"><defs><linearGradient id="tv" x2="0" y2="1"><stop stop-color="#2b3733"/><stop offset="1" stop-color="#0d1012"/></linearGradient></defs><rect width="92" height="92" rx="21" fill="url(#tv)"/><svg x="12" y="28" width="28" height="34" color="#fff"><use href="#apple"/></svg><text x="41" y="60" font-size="38" font-weight="500" fill="#fff" font-family="Inter">tv</text></svg></div>
  <div><svg viewBox="0 0 92 92"><defs><linearGradient id="mu" x2="0" y2="1"><stop stop-color="#ea6479"/><stop offset="1" stop-color="#e73b42"/></linearGradient></defs><rect width="92" height="92" rx="21" fill="url(#mu)"/><path d="M33 22l34-8v48c0 10-17 10-17 1 0-7 8-7 12-8V31l-24 6v31c0 11-20 11-20 1 0-8 10-8 15-9z" fill="#fff"/></svg></div>
  <div><svg viewBox="0 0 92 92"><defs><linearGradient id="pc" x2="0" y2="1"><stop stop-color="#b863e8"/><stop offset="1" stop-color="#6b2cab"/></linearGradient></defs><rect width="92" height="92" rx="21" fill="url(#pc)"/><g fill="none" stroke="#fff" stroke-width="4"><path d="M35 71a31 31 0 1 1 22 0"/><path d="M35 59a20 20 0 1 1 22 0"/></g><circle cx="46" cy="41" r="8" fill="#fff"/><path d="M46 51c9 0 8 5 7 14l-2 11q-1 5-5 5t-5-5l-2-11c-1-9-2-14 7-14z" fill="#fff"/></svg></div>
  <div><svg viewBox="0 0 92 92"><rect width="92" height="92" rx="21" fill="#fff"/><path d="M19 21q0-2 2-2h11l41 52q0 2-2 2H55L19 26z" fill="#ea5263"/><path d="M50 19h21q2 0 2 2v23zM19 48l23 25H21q-2 0-2-2z" fill="#ea5263"/></svg></div>
  <div><svg viewBox="0 0 92 92"><defs><linearGradient id="sp" x2="0" y2="1"><stop stop-color="#d5dee5"/><stop offset="1" stop-color="#8f8f8c"/></linearGradient></defs><rect width="92" height="92" rx="21" fill="url(#sp)"/><circle cx="46" cy="46" r="40" fill="#232628"/><circle cx="46" cy="46" r="35" fill="none" stroke="#9a9d9f" stroke-width="3" stroke-dasharray="2 1.500"/><circle cx="46" cy="46" r="30" fill="#3b3e40" stroke="#b0b3b4" stroke-width="5"/><circle cx="46" cy="46" r="18" fill="#6d7072" stroke="#55585a" stroke-width="5" stroke-dasharray="2 1"/><path d="M46 46h29M46 46 31 21M46 46 31 71" stroke="#b7babb" stroke-width="5"/><circle cx="46" cy="46" r="5" fill="#777"/></svg></div>
  <span class="flex w-[54px] items-center justify-center"><span class="mb-2 h-[108px] w-0.5 bg-[#8458a4]"></span></span>
  <div><svg viewBox="0 0 92 92"><defs><radialGradient id="mg" cx=".2" cy="1" r="1.100"><stop stop-color="#2a8bff"/><stop offset=".5" stop-color="#9a36ff"/><stop offset="1" stop-color="#ff5d6e"/></radialGradient></defs><rect width="92" height="92" rx="21" fill="#fff"/><path d="M46 11c20 0 36 15 36 34S66 80 46 80q-6 0-11-2l-9 4q-3 1-3-3v-7C15 66 10 57 10 45c0-19 16-34 36-34z" fill="url(#mg)"/><path d="M24 58l14-19q2-3 5-1l7 7 17-9-15 20q-2 2-4 0l-8-7z" fill="#fff"/></svg><i></i></div>
  <div><svg viewBox="5 5 92 92" class="overflow-visible"><defs><linearGradient id="zm" x2="0" y2="1"><stop stop-color="#588ff7"/><stop offset="1" stop-color="#3e6ff0"/></linearGradient></defs><rect width="102" height="102" rx="32" fill="url(#zm)"/><path d="M20 35q0-2 2-2h31q12 0 12 11v22q0 2-2 2H32q-12 0-12-11zM67 45l13-10q3-2 3 1v30q0 3-3 1L67 57z" fill="#fff"/></svg><i></i></div>
  <div><svg viewBox="0 0 92 92"><rect width="92" height="92" rx="21" fill="#fff"/><path d="M62 14 13 57q-2 3 0 4l6 3L62 32z" fill="#2863a4"/><path d="M62 78 13 35q-2-3 0-4l6-3 43 32z" fill="#3077c8"/><path d="M62 14l15 7v50l-15 7z" fill="#4a9cec"/></svg><i></i></div>
  <span class="flex w-[54px] items-center justify-center"><span class="mb-2 h-[108px] w-0.5 bg-[#62477f]"></span></span>
  <div><svg viewBox="9 10 92 92" class="overflow-visible"><path d="M26 0h30q10 5 20 30v70H26z" fill="#e9e9e9"/><path d="M22 5h33q14 8 24 36v60H22z" fill="#f4f4f4"/><path d="M18 11h34q26 5 39 40v56H18z" fill="#fff"/><path d="M52 11q12 8 13 22 17-2 26 18-5-30-39-40z" fill="#dcdcdc"/><path d="M35 46h40l3 45H32z" fill="#a8b1b5"/><circle cx="55" cy="68" r="19" fill="#bcc4c7" stroke="#8f989c"/><circle cx="55" cy="68" r="5" fill="#9da6aa"/><path d="M40 48h22v6H40zM34 85h42v6H34z" fill="#2e3336"/></svg></div>
  <div><svg viewBox="8 10 92 92" class="overflow-visible"><path d="M0 22h107v69H0z" fill="#1f1c24"/><path d="M0 22h20v69H0z" fill="#4a484d"/><circle cx="3" cy="25" r="1" fill="#ed6a5f"/><circle cx="6" cy="25" r="1" fill="#f5bf50"/><circle cx="9" cy="25" r="1" fill="#62c655"/><path d="M24 29h23v3H24z" fill="#ddd"/><path d="M24 35h80" stroke="#66636b" stroke-dasharray="6 5"/><path d="M0 64h107" stroke="#7a2f35"/><g fill="#4a646e"><path d="M51 42h11v13H51zM62 47h11v4H62zM84 51h11v4H84zM40 65h10v4H40zM51 69h10v8H51zM62 65h10v5H62zM84 65h11v4H84zM40 73h10v10H40zM62 78h10v6H62zM73 69h10v4H73z"/></g><rect x="70" y="72" width="36" height="36" rx="8" fill="#f7f6f4"/><path d="M70 83v-3q0-8 8-8h20q8 0 8 8v3z" fill="#e6604f"/><text x="88" y="81" text-anchor="middle" font-size="9" font-weight="600" fill="#fff" font-family="Inter">JUL</text><text x="88" y="103" text-anchor="middle" font-size="20" fill="#222" font-family="Roboto">17</text></svg></div>
  <div><svg viewBox="-5 10 92 92" class="overflow-visible"><defs><linearGradient id="tr"><stop stop-color="#55585a"/><stop offset=".45" stop-color="#9a9d9e"/><stop offset="1" stop-color="#4f5254"/></linearGradient></defs><path d="M2 14 20 4l9-4 12 8L50 1l14 9 14 6-6 12H8z" fill="#e2e2e0"/><path d="M26 12l12-3 6 10-14 3zM52 8l9 8-8 8z" fill="#5b7f9b"/><path d="M12 10l6 8M46 6l4 14M68 12l-6 10M34 4l-4 12" stroke="#7c5a45" stroke-width="2"/><path d="M0 14q40 22 82 0l-12 82q-28 20-56 0z" fill="url(#tr)"/><path d="M0 14q2-6 8-8M82 14q-2-6-8-8" fill="none" stroke="#9fa2a3" stroke-width="2"/></svg></div>
</footer>
</body>
</html>
